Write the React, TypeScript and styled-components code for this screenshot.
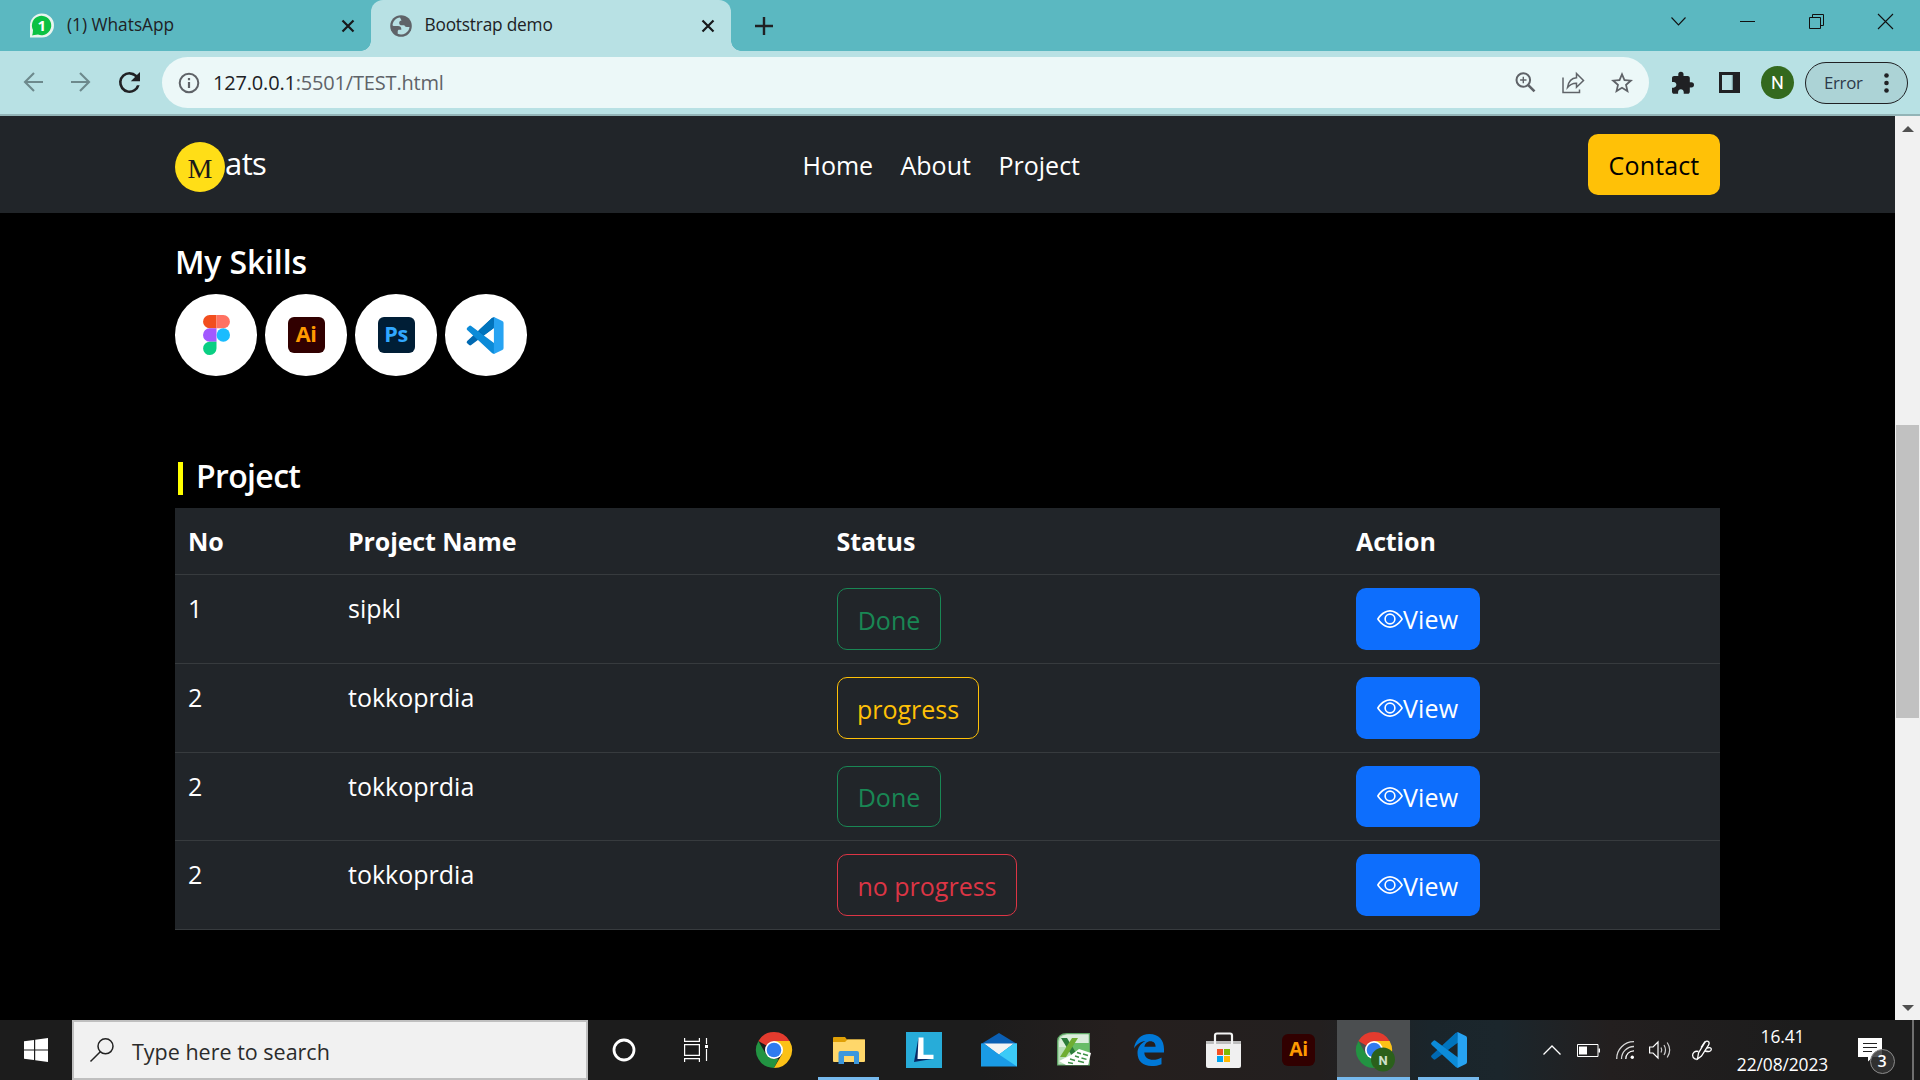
import React from "react";
import styled, { createGlobalStyle } from "styled-components";

const Global = createGlobalStyle`
  * { box-sizing: border-box; }
  html, body { margin: 0; padding: 0; background: #000; overflow: hidden; }
  body { font-family: "Open Sans", "Noto Sans", sans-serif; }
  svg { display: block; flex: none; overflow: visible; }
  button { font: inherit; letter-spacing: inherit; margin: 0; }
`;

const Screen = styled.div`
  width: 1920px;
  height: 1080px;
  display: flex;
  flex-direction: column;
  background: #000;
  overflow: hidden;
`;

/* ---------- browser chrome ---------- */
const TabStrip = styled.div`
  height: 51px;
  flex: none;
  display: flex;
  background: #5bb8c1;
  color: #202124;
`;
const Tab = styled.div<{ $active?: boolean; $w: number; $pad: number }>`
  width: ${(p) => p.$w}px;
  padding: 0 17px 0 ${(p) => p.$pad}px;
  height: 51px;
  display: flex;
  align-items: center;
  background: ${(p) => (p.$active ? "#b8e1e4" : "transparent")};
  border-radius: 12px 12px 0 0;
  position: relative;
  ${(p) =>
    p.$active &&
    `
    &::before, &::after { content: ""; position: absolute; bottom: 0; width: 10px; height: 10px; }
    &::before { left: -10px; background: radial-gradient(circle at 0 0, transparent 9.5px, #b8e1e4 10px); }
    &::after { right: -10px; background: radial-gradient(circle at 100% 0, transparent 9.5px, #b8e1e4 10px); }
  `}
`;
const TabTitle = styled.span<{ $gap: number; $ls?: number }>`
  flex: 1;
  margin-left: ${(p) => p.$gap}px;
  padding-bottom: 1px;
  font-size: 17.3px;
  line-height: 24px;
  letter-spacing: ${(p) => p.$ls ?? 0}px;
  white-space: nowrap;
`;
const NewTab = styled.div`
  margin-left: 24px;
  display: flex;
  align-items: center;
  flex: 1;
`;
const WindowControls = styled.div`
  display: flex;
  padding: 14px 27px 0 0;
  gap: 54px;
`;
const Toolbar = styled.div`
  height: 65px;
  flex: none;
  display: flex;
  align-items: center;
  padding: 0 11px 0 23px;
  background: #b8e1e4;
  border-bottom: 2px solid #93b4b7;
`;
const NavIcons = styled.div`
  display: flex;
  width: 139px;
  gap: 24px;
`;
const AddressBar = styled.div`
  width: 1487px;
  height: 51px;
  border-radius: 26px;
  background: #ecf8f8;
  display: flex;
  align-items: center;
  padding: 0 16px 0 16px;
`;
const Url = styled.span`
  flex: 1;
  margin-left: 13px;
  font-size: 20px;
  line-height: 28px;
  letter-spacing: -0.18px;
  color: #5f6368;
  b { font-weight: 400; color: #202124; }
`;
const OmniIcons = styled.div`
  display: flex;
  align-items: center;
  gap: 26px;
`;
const Extensions = styled.div`
  display: flex;
  align-items: center;
  margin-left: 23px;
`;
const Avatar = styled.div`
  width: 33px;
  height: 33px;
  margin-left: 21px;
  border-radius: 50%;
  background: #33691e;
  color: #fff;
  font: 18px/33px Roboto, sans-serif;
  text-align: center;
`;
const ErrorPill = styled.div`
  width: 103px;
  height: 42px;
  margin-left: 11px;
  padding: 0 18px 0 18px;
  border: 1.5px solid #202124;
  border-radius: 21px;
  background: #acd3d6;
  display: flex;
  align-items: center;
  justify-content: space-between;
  font-size: 16.8px;
  letter-spacing: -0.3px;
  color: #2c3a4a;
`;

/* ---------- web page ---------- */
const Viewport = styled.div`
  height: 904px;
  flex: none;
  display: flex;
`;
const Page = styled.div`
  width: 1895px;
  background: #000;
  color: #fff;
  font-size: 25px;
`;
const Navbar = styled.nav`
  height: 97px;
  padding: 0 175px;
  background: #212529;
  display: grid;
  grid-template-columns: 627.5px 1fr auto;
  align-items: center;
`;
const Brand = styled.div`
  display: flex;
  align-items: center;
  padding-top: 4px;
  font-size: 31px;
  letter-spacing: -0.6px;
  line-height: 44px;
  span { padding-bottom: 7px; }
`;
const BrandMark = styled.div`
  width: 50px;
  height: 50px;
  border-radius: 50%;
  background: #ffde17;
  color: #1a1a1a;
  font: 28px/53px "Liberation Serif", serif;
  letter-spacing: 0;
  text-align: center;
`;
const NavLinks = styled.div`
  display: flex;
  padding-top: 2px;
`;
const NavLink = styled.a<{ $w: number }>`
  width: ${(p) => p.$w}px;
  line-height: 39px;
  white-space: nowrap;
`;
const Contact = styled.button`
  width: 132px;
  height: 61px;
  padding: 1px 0 0;
  border: 0;
  border-radius: 10px;
  background: #ffc107;
  color: #000;
  letter-spacing: 0.15px;
`;
const Content = styled.main`
  padding: 29px 175px 0;
`;
const Heading = styled.h5<{ $ls?: number }>`
  margin: 0;
  height: 39px;
  display: flex;
  align-items: center;
  font-size: 32px;
  line-height: 39px;
  font-weight: 600;
  letter-spacing: ${(p) => p.$ls ?? 0}px;
`;
const Accent = styled.span`
  width: 5px;
  height: 33px;
  margin: 5px 13px 0 3px;
  background: #ff0;
`;
const Skills = styled.div`
  display: flex;
  gap: 7.6px;
  padding: 13px 0 80px;
`;
const Skill = styled.div`
  width: 82.4px;
  height: 82px;
  border-radius: 50%;
  background: #fff;
  display: flex;
  align-items: center;
  justify-content: center;
`;
const AdobeTile = styled.div<{ $bg: string; $fg: string; $size: number }>`
  width: ${(p) => p.$size}px;
  height: ${(p) => p.$size - 1}px;
  border-radius: 6px;
  background: ${(p) => p.$bg};
  color: ${(p) => p.$fg};
  font: 700 ${(p) => p.$size * 0.585}px/${(p) => p.$size - 3}px "Open Sans", sans-serif;
  letter-spacing: -0.3px;
  text-align: center;
`;
const Table = styled.div`
  margin-top: 13px;
  width: 1545px;
  background: #212529;
`;
const Row = styled.div<{ $head?: boolean }>`
  display: grid;
  grid-template-columns: 160px 488.5px 519.5px 1fr;
  height: ${(p) => (p.$head ? 67 : 88.75)}px;
  padding: 13px 0 0 13px;
  border-bottom: 1px solid #373b3e;
  font-weight: ${(p) => (p.$head ? 700 : 400)};
  letter-spacing: ${(p) => (p.$head ? -0.12 : 0)}px;
  line-height: 40px;
`;
const Cell = styled.div`
  white-space: nowrap;
`;
const Badge = styled.button<{ $color: string; $w: number }>`
  display: block;
  width: ${(p) => p.$w}px;
  height: 61.75px;
  padding: 2px 0 0 1px;
  border: 1px solid ${(p) => p.$color};
  border-radius: 10px;
  background: transparent;
  color: ${(p) => p.$color};
`;
const ViewButton = styled.button`
  width: 124px;
  height: 61.75px;
  padding: 0 0 0 21px;
  border: 0;
  border-radius: 10px;
  background: #0d6efd;
  color: #fff;
  display: flex;
  align-items: center;
  line-height: 39px;
  letter-spacing: 0.2px;
  span { padding-top: 2px; }
`;
const Scrollbar = styled.div`
  width: 25px;
  background: #f1f1f1;
  display: flex;
  flex-direction: column;
  align-items: center;
  padding: 10px 0 9px;
`;
const Thumb = styled.div`
  width: 23px;
  height: 293px;
  margin: 293px 0 auto;
  background: #c1c1c1;
`;

/* ---------- taskbar ---------- */
const Taskbar = styled.div`
  height: 60px;
  flex: none;
  display: flex;
  color: #fff;
  background: linear-gradient(90deg, #1c1c1c 0, #1c1c1c 980px, #251f1e 1120px, #231f1f 1320px, #1a252b 1430px, #1b262c 1500px, #231f1f 1610px, #1c1c1c 1800px, #1c1c1c);
`;
const Start = styled.div`
  width: 72px;
  display: flex;
  align-items: center;
  justify-content: center;
`;
const Search = styled.div`
  width: 516px;
  border: 2px solid #bfbfbf;
  background: #f1f1f1;
  color: #2b2b2b;
  display: flex;
  align-items: center;
  padding-left: 16px;
  font-size: 21.5px;
  span { margin-left: 18px; padding-top: 2px; }
`;
const TaskItem = styled.div<{ $w?: number }>`
  width: ${(p) => p.$w ?? 75}px;
  height: 60px;
  display: flex;
  justify-content: center;
`;
const Apps = styled.div`
  display: flex;
  margin-left: 4px;
`;
const TaskTile = styled.div<{ $open?: boolean; $active?: boolean }>`
  width: ${(p) => (p.$active ? 73 : 61)}px;
  height: 60px;
  display: flex;
  align-items: center;
  justify-content: center;
  background: ${(p) => (p.$active ? "#4b4e50" : "transparent")};
  box-shadow: ${(p) => (p.$open ? "inset 0 -3px #76b9ed" : "none")};
`;
const Tray = styled.div`
  margin-left: auto;
  display: flex;
  align-items: center;
`;
const TrayIcon = styled.div<{ $gap: number }>`
  margin-right: ${(p) => p.$gap}px;
`;
const Clock = styled.div`
  width: 95px;
  margin-right: 28px;
  padding-bottom: 1px;
  font-size: 17.4px;
  line-height: 28px;
  text-align: center;
  white-space: nowrap;
  letter-spacing: -0.1px;
`;
const Notifications = styled.div`
  width: 36px;
  height: 60px;
  padding-top: 18px;
  position: relative;
`;
const Count = styled.span`
  position: absolute;
  left: 11.5px;
  top: 29px;
  width: 25px;
  height: 25px;
  border: 1px solid #8b8b8b;
  border-radius: 50%;
  background: rgba(52, 52, 52, 0.85);
  font: 600 16px/22px "Open Sans", sans-serif;
  text-align: center;
`;
const ShowDesktop = styled.div`
  width: 8px;
  height: 60px;
  margin-left: 18px;
  border-left: 2px solid #6f6f6f;
`;

/* ---------- icons ---------- */
const Cross = ({ size = 12, w = 2.2 }: { size?: number; w?: number }) => (
  <svg width={size} height={size} viewBox="0 0 12 12" stroke="#17191b" strokeWidth={w} fill="none">
    <path d="M.5.5l11 11M11.500.5l-11 11" />
  </svg>
);
const WhatsApp = () => (
  <svg width="26" height="26" viewBox="0 0 26 26">
    <path d="M1 24.500V13A12 12 0 1 1 13 24.500z" fill="#e9f5ef" />
    <path d="M3.500 22.300L4 17A9.700 9.700 0 1 1 9 21.500z" fill="#0cc143" />
    <path d="M4 20.500L3.300 22.500 6.500 21z" fill="#0cc143" />
    <text x="12.800" y="18.300" textAnchor="middle" fontSize="15" fontWeight="700" fill="#fff" fontFamily="Open Sans, sans-serif">1</text>
  </svg>
);
const Globe = () => (
  <svg width="22" height="22" viewBox="0 0 22 22">
    <circle cx="11" cy="11" r="10.800" fill="#5f6368" />
    <path d="M10 2.500C6 3 3 6 2.500 10.200L3.500 11H8c2.300 0 3.300 1 3.300 3v.8H9.200c-1 0-1.500.6-1.500 1.500v2.500c2.500 1.200 5.500 1 7.800-.5 2.200-1.400 3.700-3.600 4-6.300h-2.800c-1.200 0-2-.6-2.300-1.700H12c-1.800 0-2.800-1-2.800-2.400S10 5.800 11.500 5.600z" fill="#b8e1e4" />
  </svg>
);
const Back = () => (
  <svg width="20" height="20" viewBox="0 0 20 20" fill="none" stroke="#6d898c" strokeWidth="2.100">
    <path d="M20 10H2M11 1L2 10l9 9" />
  </svg>
);
const Forward = () => (
  <svg width="28" height="20" viewBox="-4 0 28 20" fill="none" stroke="#6d898c" strokeWidth="2.100">
    <path d="M0 10h18M9 1l9 9-9 9" />
  </svg>
);
const Reload = () => (
  <svg width="21" height="21" viewBox="4 4 16 16" fill="#202124">
    <path d="M17.650 6.350A7.960 7.960 0 0 0 12 4a8 8 0 1 0 7.730 10h-2.080A6 6 0 1 1 12 6c1.660 0 3.140.69 4.220 1.780L13 11h7V4z" />
  </svg>
);
const Info = () => (
  <svg width="22" height="22" viewBox="0 0 22 22" fill="none" stroke="#5f6368" strokeWidth="2">
    <circle cx="11" cy="11" r="9.300" />
    <path d="M11 10v6M11 6v2.200" strokeWidth="2.200" />
  </svg>
);
const ZoomIn = () => (
  <svg width="21" height="21" viewBox="0 0 21 21" fill="none" stroke="#5f6368" strokeWidth="2">
    <circle cx="8.300" cy="8" r="6.800" />
    <path d="M13 12.800l6.500 6.500" strokeWidth="2.600" />
    <path d="M8.300 4.800v6.400M5.100 8h6.400" strokeWidth="1.400" />
  </svg>
);
const Share = () => (
  <svg width="23" height="22" viewBox="0 0 23 22" fill="none" stroke="#5f6368" strokeWidth="1.500">
    <path d="M1 5.500V20.500H17.500V17.500" />
    <path d="M5.500 15.500C6.500 9.500 9.500 6 14.500 5.800V1.500L21.500 8.500 14.500 15.200V11.200C10.500 11 8 12.500 5.500 15.500z" />
  </svg>
);
const Star = () => (
  <svg width="22" height="22" viewBox="2 2 20 20" fill="#5f6368">
    <path d="M22 9.240l-7.190-.62L12 2 9.190 8.630 2 9.240l5.460 4.730L5.820 21 12 17.270 18.180 21l-1.630-7.030L22 9.240zM12 15.400l-3.760 2.270 1-4.280-3.320-2.880 4.380-.38L12 6.100l1.710 4.040 4.380.38-3.320 2.880 1 4.280L12 15.400z" />
  </svg>
);
const Puzzle = () => (
  <svg width="22" height="22" viewBox="2 1.500 21 20.500" fill="#202124">
    <path d="M20.500 11H19V7c0-1.100-.9-2-2-2h-4V3.500a2.500 2.500 0 0 0-5 0V5H4c-1.100 0-1.990.9-1.990 2v3.800H3.500c1.490 0 2.700 1.210 2.700 2.700s-1.210 2.700-2.700 2.700H2V20c0 1.100.9 2 2 2h3.800v-1.500c0-1.490 1.210-2.700 2.700-2.700s2.700 1.210 2.700 2.700V22H17c1.100 0 2-.9 2-2v-4h1.500a2.500 2.500 0 0 0 0-5z" />
  </svg>
);
const SidePanelBox = styled.div`
  margin-left: 25px;
`;
const SidePanel = () => (
  <SidePanelBox>
    <svg width="21" height="21" viewBox="0 0 21 21">
      <path d="M0 0h21v21H0z" fill="#202124" />
      <path d="M3 3h11v15H3z" fill="#b8e1e4" />
      <path d="M12.800 3H14v15h-1.200z" fill="#7ea3a6" />
    </svg>
  </SidePanelBox>
);
const Dots = () => (
  <svg width="5" height="20" viewBox="0 0 5 20" fill="#202124">
    <circle cx="2.500" cy="2.500" r="2.300" />
    <circle cx="2.500" cy="10" r="2.300" />
    <circle cx="2.500" cy="17.500" r="2.300" />
  </svg>
);
const Figma = () => (
  <svg width="27" height="40" viewBox="0 0 27 40">
    <path d="M6.700 0H13.500V13.300H6.700a6.650 6.650 0 0 1 0-13.300z" fill="#f24e1e" />
    <path d="M13.500 0h6.800a6.650 6.650 0 0 1 0 13.300h-6.800z" fill="#ff7262" />
    <path d="M6.700 13.300h6.800v13.400H6.700a6.700 6.700 0 0 1 0-13.400z" fill="#a259ff" />
    <circle cx="20.300" cy="20" r="6.700" fill="#1abcfe" />
    <path d="M6.700 26.700h6.800v6.600a6.700 6.700 0 1 1-6.800-6.600z" fill="#0acf83" />
  </svg>
);
const VSCode = ({ size, dx = 0 }: { size: number; dx?: number }) => (
  <svg width={size} height={size} viewBox={`${dx} 0 36 36`}>
    <path d="M27 0v10.500L4.500 27.300a1.500 1.500 0 0 1-2 0L.6 25.500a1.500 1.500 0 0 1 0-2.200L25 .7z" fill="#0069b2" />
    <path d="M27 36V25.500L4.500 8.700a1.500 1.500 0 0 0-2 0L.6 10.500a1.500 1.500 0 0 0 0 2.200L25 35.300z" fill="#0c8bd8" />
    <path d="M25 .7L12 13l4.500 5L27 10.200z" fill="#0074bd" />
    <path d="M26.600 0L34.800 3.900Q36 4.500 36 5.900V30.100Q36 31.500 34.800 32.100L26.600 36z" fill="#27a3f2" />
  </svg>
);
const Eye = () => (
  <svg width="26" height="26" viewBox="0 0 16 16" fill="#fff">
    <path d="M16 8s-3-5.500-8-5.500S0 8 0 8s3 5.500 8 5.500S16 8 16 8M1.173 8a13 13 0 0 1 1.660-2.043C4.120 4.668 5.880 3.500 8 3.500s3.879 1.168 5.168 2.457A13 13 0 0 1 14.828 8q-.086.13-.195.288c-.335.480-.830 1.120-1.465 1.755C11.879 11.332 10.119 12.500 8 12.500s-3.879-1.168-5.168-2.457A13 13 0 0 1 1.172 8z" />
    <path d="M8 5.500a2.500 2.500 0 1 0 0 5 2.500 2.500 0 0 0 0-5M4.500 8a3.500 3.500 0 1 1 7 0 3.500 3.500 0 0 1-7 0" />
  </svg>
);
const Chrome = ({ badge }: { badge?: boolean }) => (
  <svg width="36" height="36" viewBox="0 0 36 36">
    <path d="M18 18L2.400 9A18 18 0 0 1 33.600 9z" fill="#e33b2e" />
    <path d="M2.400 9L10.200 22.500 18 27h4.500L18 36A18 18 0 0 1 2.400 9z" fill="#229342" />
    <path d="M18 9H33.600A18 18 0 0 1 18 36L25.800 22.500z" fill="#fcc117" />
    <circle cx="18" cy="18" r="9" fill="#fff" />
    <circle cx="18" cy="18" r="7.300" fill="#2f7bf0" />
    {badge && (
      <>
        <circle cx="27" cy="27.500" r="12" fill="#2b601b" />
        <text x="27" y="32.500" fontSize="13" fontWeight="700" fill="#cfe0cb" textAnchor="middle" fontFamily="Roboto, sans-serif">N</text>
      </>
    )}
  </svg>
);
const Folder = () => (
  <svg width="32" height="26" viewBox="0 0 32 26">
    <path d="M0 1a1 1 0 0 1 1-1h11l2 2.500h17a1 1 0 0 1 1 1V10H0z" fill="#e0a006" />
    <path d="M0 5h12l2.500-2.500H32V24a1 1 0 0 1-1 1H1a1 1 0 0 1-1-1z" fill="#ffd76a" />
    <path d="M5.500 27V16a2 2 0 0 1 2-2H24a2 2 0 0 1 2 2v11h-5v-8H11v8z" fill="#3b97dd" />
  </svg>
);
const LApp = () => (
  <svg width="36" height="36" viewBox="0 0 36 36">
    <path d="M0 0h36v36H0z" fill="#27acd9" />
    <path d="M12.500 5.500L8 30l18-3-9-4z" fill="#062a66" />
    <path d="M12.500 5.500H17.500V22.800H27.500V27H11.500z" fill="#fff" />
  </svg>
);
const Mail = () => (
  <svg width="36" height="34" viewBox="0 0 36 34">
    <path d="M0 11L18 0l18 11v8H0z" fill="#0a5fb4" />
    <path d="M3 10.500h30L18 22z" fill="#f3f3f3" />
    <path d="M0 10.500h3L18 21.500 33 10.500h3v23H0z" fill="#1a9be6" />
    <path d="M36 10.500h-3L18 21.500l18 12z" fill="#3ccbf7" />
  </svg>
);
const Excel = () => (
  <svg width="34" height="34" viewBox="0 0 34 34">
    <path d="M.7 8Q1 1 10 .7H32.300V32H.7z" fill="#b9dfb9" stroke="#5fa866" strokeWidth="1.200" />
    <path d="M10 1.500H31.500V14H2Q1 3 10 1.500z" fill="#dceedd" />
    <path d="M14 10H32V20H14z" fill="#68bd67" />
    <path d="M4 5h6l11 18h-6z" fill="#2b7b3a" />
    <path d="M15 5h6L9 24H3z" fill="#6fae33" />
    <path d="M2 28L14 22l8-6 12 4-3 12H9z" fill="#fff" />
    <path d="M20 19.500l4 1.200M26 21l5 1.500M18 23l4 1.200M24.500 25l5 1.400M13 26l5 1.500M21 28l6 1.500M11 29.500l5 1" stroke="#3f9148" strokeWidth="1.500" />
  </svg>
);
const Edge = () => (
  <svg width="30" height="32" viewBox="0 0 30 32">
    <path d="M0 14.500C1 6 7 0 15.500 0 25 0 30 6.500 30 15v3.500H10.300c.2 5 4 7.300 8.700 7.300 3.200 0 6-.9 8.500-2.300v6.700C24.500 31.500 21 32 17.500 32 9 32 3.500 27 3.500 19c0-5.500 3-9.500 8-12C6.500 7.500 2.500 10.500 0 14.500zM10.400 12.800h11.200c0-3.500-1.800-5.600-5.300-5.600-3.200 0-5.400 2.400-5.900 5.600z" fill="#0078d7" />
  </svg>
);
const Store = () => (
  <svg width="35" height="36" viewBox="0 0 35 36">
    <path d="M0 9h35v25a2 2 0 0 1-2 2H2a2 2 0 0 1-2-2z" fill="#f0f0f0" />
    <path d="M0 9h35v3H0z" fill="#bdbdbd" />
    <path d="M9 12V3.500A2 2 0 0 1 11 1.500H24a2 2 0 0 1 2 2V12" fill="none" stroke="#f4f4f4" strokeWidth="2.200" />
    <path d="M11 17h6v6h-6z" fill="#f25022" />
    <path d="M18 17h6v6h-6z" fill="#7fba00" />
    <path d="M11 24h6v6h-6z" fill="#00a4ef" />
    <path d="M18 24h6v6h-6z" fill="#ffb900" />
  </svg>
);
const Windows = () => (
  <svg width="24" height="24" viewBox="0 0 24 24" fill="#fff">
    <path d="M0 3.300L10 2v9.400H0zM11.200 1.800L24 0v11.400H11.200zM0 12.600h10V22L0 20.700zM11.200 12.600H24V24l-12.800-1.800z" />
  </svg>
);
const TaskView = () => (
  <svg width="24" height="24" viewBox="0 0 24 24" fill="none" stroke="#fff" strokeWidth="1.200">
    <path d="M.6 0v3.400h14.800V0M.6 6.600h14.800v10.800H.6zM.6 24v-3.400h14.800V24M22.500 0v6M22.500 11v12" />
    <path d="M21 7h3v3h-3z" fill="#fff" stroke="none" />
  </svg>
);
const Wifi = () => (
  <svg width="18" height="18" viewBox="0 0 18 18" fill="none" stroke="#d8d8d8" strokeWidth="1.300">
    <path d="M.7 18A17 17 0 0 1 18 .7M5.500 18A12.500 12.500 0 0 1 18 5.500" />
    <path d="M9.800 18A8 8 0 0 1 18 9.800" stroke="#fff" />
    <circle cx="16.300" cy="16.300" r="1.700" fill="#fff" stroke="none" />
  </svg>
);
const Volume = () => (
  <svg width="22" height="18" viewBox="0 0 22 18" fill="none" stroke="#fff" strokeWidth="1.200">
    <path d="M.6 6H4l5-5v16L4 12H.6z" />
    <path d="M12 6.500q1.500 2.500 0 5M15 4q3 5 0 10M18.200 1.500q5 7.500 0 15" stroke="#d0d0d0" />
  </svg>
);
const Pen = () => (
  <svg width="20" height="20" viewBox="0 0 20 20" fill="none" stroke="#fff" strokeWidth="1.300">
    <path d="M5.500 19l1-6L13 2.200q2-2.200 4 0 .5 1.300-.5 3L9.500 16z" />
    <path d="M6.500 11.500C2.500 10.500.5 13 .6 15.500c.2 3 3.400 4 4.900 3.500M9 7.500l4-6M15 8q4.500-1 4.300 1.500Q19 12.500 13 11" />
  </svg>
);

const green = "#198754";
const projects = [
  { no: "1", name: "sipkl", status: "Done", color: green, w: 104 },
  { no: "2", name: "tokkoprdia", status: "progress", color: "#ffc107", w: 142 },
  { no: "2", name: "tokkoprdia", status: "Done", color: green, w: 104 },
  { no: "2", name: "tokkoprdia", status: "no progress", color: "#dc3545", w: 180 },
];

const apps = [
  { icon: <Chrome /> },
  { icon: <Folder />, open: true },
  { icon: <LApp /> },
  { icon: <Mail /> },
  { icon: <Excel /> },
  { icon: <Edge /> },
  { icon: <Store /> },
  { icon: <AdobeTile $bg="#310000" $fg="#ff9a00" $size={33}>Ai</AdobeTile> },
  { icon: <Chrome badge />, open: true, active: true },
  { icon: <VSCode size={36} />, open: true },
];

export default function App() {
  return (
    <Screen>
      <Global />
      <TabStrip>
        <Tab $w={371} $pad={29}>
          <WhatsApp />
          <TabTitle $gap={12}>(1) WhatsApp</TabTitle>
          <Cross size={12} />
        </Tab>
        <Tab $w={360} $pad={19} $active>
          <Globe />
          <TabTitle $gap={12.5} $ls={-0.2}>Bootstrap demo</TabTitle>
          <Cross size={12} />
        </Tab>
        <NewTab>
          <svg width="18" height="18" viewBox="0 0 18 18" stroke="#202124" strokeWidth="2.400"><path d="M9 0v18M0 9h18" /></svg>
        </NewTab>
        <WindowControls>
          <svg width="15" height="16" viewBox="0 0 15 16" fill="none" stroke="#111" strokeWidth="1.100"><path d="M.5 3.500l7 7.500 7-7.500" /></svg>
          <svg width="15" height="16" viewBox="0 0 15 16" stroke="#111"><path d="M0 7.500h15" /></svg>
          <svg width="15" height="15" viewBox="0 0 15 15" fill="none" stroke="#111"><path d="M.5 3.500h11v11H.5zM3.500 3.500V.5h11v11h-3" /></svg>
          <svg width="15" height="15" viewBox="0 0 15 15" stroke="#111" strokeWidth="1.100"><path d="M0 0l15 15M15 0L0 15" /></svg>
        </WindowControls>
      </TabStrip>
      <Toolbar>
        <NavIcons>
          <Back />
          <Forward />
          <Reload />
        </NavIcons>
        <AddressBar>
          <Info />
          <Url><b>127.0.0.1</b>:5501/TEST.html</Url>
          <OmniIcons><ZoomIn /><Share /><Star /></OmniIcons>
        </AddressBar>
        <Extensions>
          <Puzzle />
          <SidePanel />
          <Avatar>N</Avatar>
          <ErrorPill>Error<Dots /></ErrorPill>
        </Extensions>
      </Toolbar>

      <Viewport>
        <Page>
          <Navbar>
            <Brand><BrandMark>M</BrandMark><span>ats</span></Brand>
            <NavLinks>
              <NavLink $w={98}>Home</NavLink>
              <NavLink $w={98}>About</NavLink>
              <NavLink $w={90}>Project</NavLink>
            </NavLinks>
            <Contact>Contact</Contact>
          </Navbar>
          <Content>
            <Heading $ls={-0.15}>My Skills</Heading>
            <Skills>
              <Skill><Figma /></Skill>
              <Skill><AdobeTile $bg="#310000" $fg="#ff9a00" $size={37}>Ai</AdobeTile></Skill>
              <Skill><AdobeTile $bg="#001e36" $fg="#31a8ff" $size={37}>Ps</AdobeTile></Skill>
              <Skill><VSCode size={37} dx={1.4} /></Skill>
            </Skills>
            <Heading $ls={-0.65}><Accent />Project</Heading>
            <Table>
              <Row $head>
                <Cell>No</Cell>
                <Cell>Project Name</Cell>
                <Cell>Status</Cell>
                <Cell>Action</Cell>
              </Row>
              {projects.map((p, i) => (
                <Row key={i}>
                  <Cell>{p.no}</Cell>
                  <Cell>{p.name}</Cell>
                  <Cell><Badge $color={p.color} $w={p.w}>{p.status}</Badge></Cell>
                  <Cell><ViewButton><Eye /><span>View</span></ViewButton></Cell>
                </Row>
              ))}
            </Table>
          </Content>
        </Page>
        <Scrollbar>
          <svg width="12" height="6" viewBox="0 0 12 6" fill="#505050"><path d="M6 0l6 6H0z" /></svg>
          <Thumb />
          <svg width="12" height="6" viewBox="0 0 12 6" fill="#505050"><path d="M6 6L0 0h12z" /></svg>
        </Scrollbar>
      </Viewport>

      <Taskbar>
        <Start><Windows /></Start>
        <Search>
          <svg width="24" height="24" viewBox="0 0 24 24" fill="none" stroke="#222" strokeWidth="1.500"><circle cx="15.500" cy="8.300" r="7.500" /><path d="M10.300 13.700L.5 23.500" /></svg>
          <span>Type here to search</span>
        </Search>
        <TaskItem $w={72}><TaskTile>
          <svg width="24" height="24" viewBox="0 0 24 24" fill="none" stroke="#fff" strokeWidth="2.800"><circle cx="12" cy="12" r="10" /></svg>
        </TaskTile></TaskItem>
        <TaskItem $w={72}><TaskTile><TaskView /></TaskTile></TaskItem>
        <Apps>
          {apps.map((a, i) => (
            <TaskItem key={i}><TaskTile $open={a.open} $active={a.active}>{a.icon}</TaskTile></TaskItem>
          ))}
        </Apps>
        <Tray>
          <TrayIcon $gap={16}><svg width="18" height="10" viewBox="0 0 18 10" fill="none" stroke="#fff" strokeWidth="1.300"><path d="M.5 9.500L9 1l8.500 8.500" /></svg></TrayIcon>
          <TrayIcon $gap={16}><svg width="23" height="13" viewBox="0 0 23 13"><path d="M.5.5h20.500v12H.5z" fill="none" stroke="#fff" /><path d="M2 2.500h8v8H2zM21.500 4.500H23v4h-1.500z" fill="#fff" /></svg></TrayIcon>
          <TrayIcon $gap={15}><Wifi /></TrayIcon>
          <TrayIcon $gap={21}><Volume /></TrayIcon>
          <TrayIcon $gap={23}><Pen /></TrayIcon>
          <Clock>16.41<br />22/08/2023</Clock>
          <Notifications>
            <svg width="24" height="24" viewBox="0 0 24 24"><path d="M0 0h24v19H15l-5 4.500V19H0z" fill="#fff" /><path d="M5 5.500h14M5 9.500h14M5 13.500h9" stroke="#222" strokeWidth="1.200" /></svg>
            <Count>3</Count>
          </Notifications>
          <ShowDesktop />
        </Tray>
      </Taskbar>
    </Screen>
  );
}
